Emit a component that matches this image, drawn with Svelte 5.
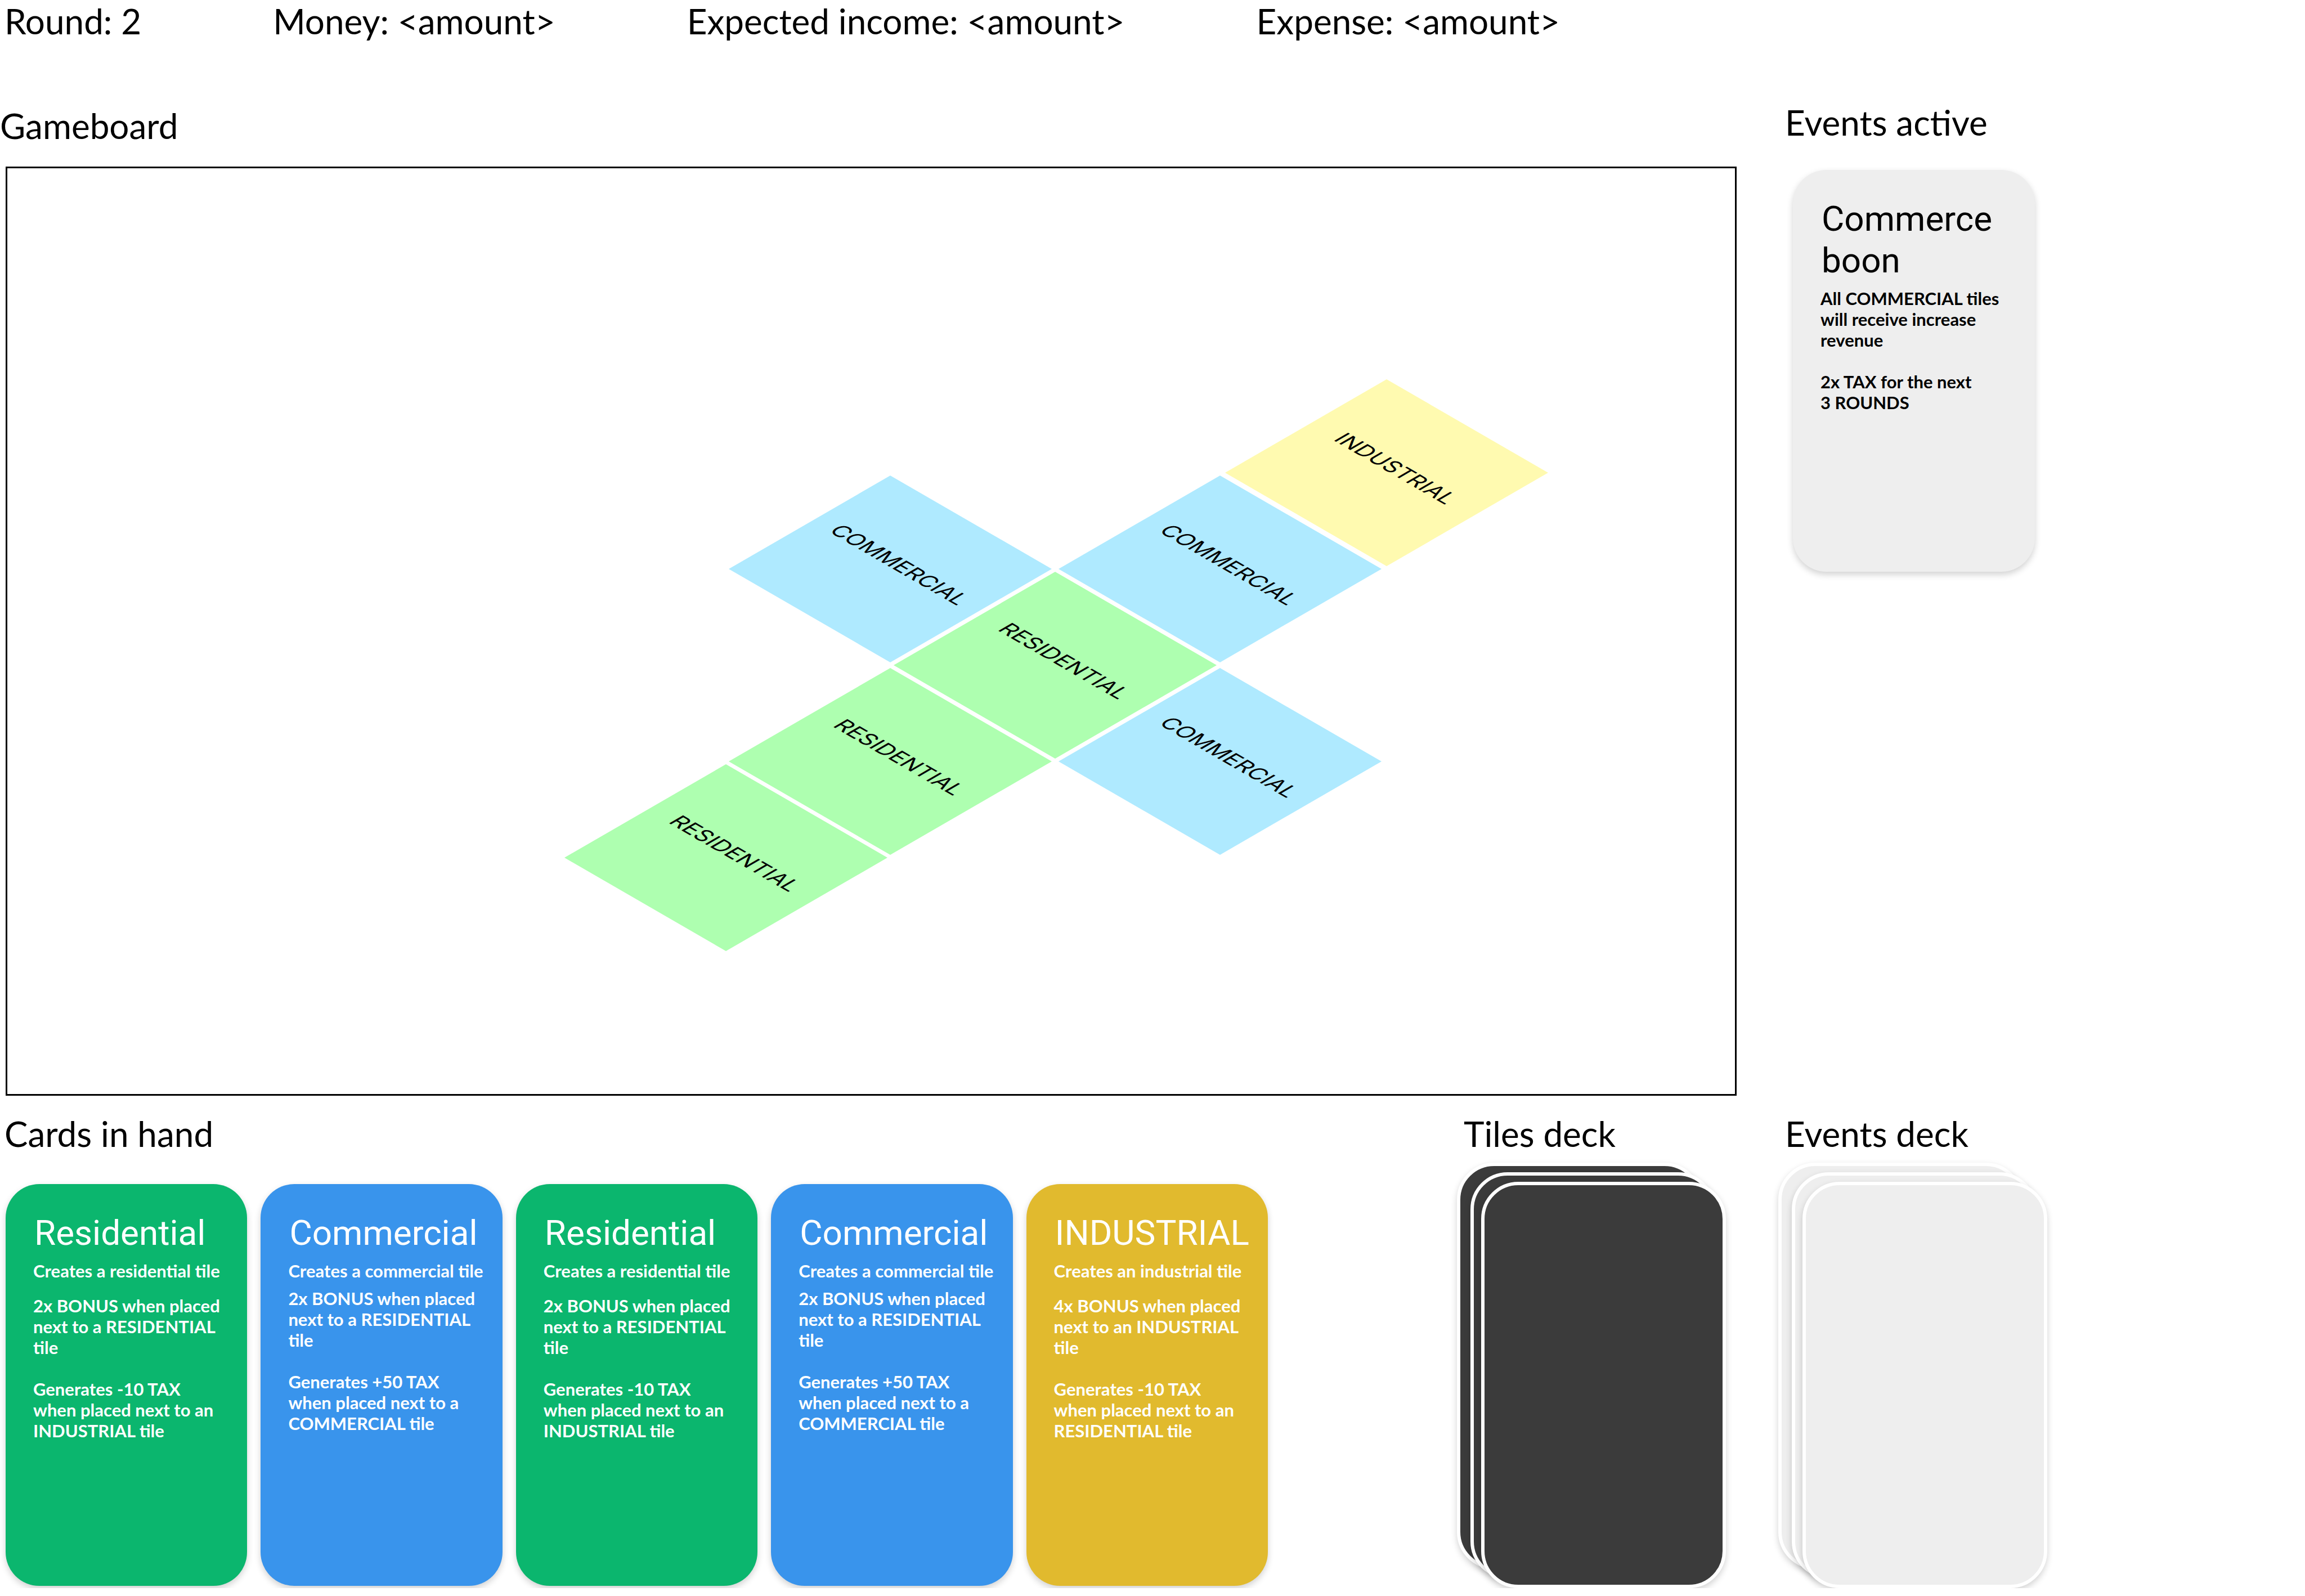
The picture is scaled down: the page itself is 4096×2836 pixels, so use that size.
<script>
  const stats = [
    { label: 'Round', value: '2' },
    { label: 'Money', value: '<amount>' },
    { label: 'Expected income', value: '<amount>' },
    { label: 'Expense', value: '<amount>' }
  ];

  // Tile centres on the board's own canvas.
  const tiles = [
    { kind: 'commercial', x: 1569, y: 712 },
    { kind: 'commercial', x: 2155, y: 712 },
    { kind: 'commercial', x: 2155, y: 1054 },
    { kind: 'industrial', x: 2451, y: 541 },
    { kind: 'residential', x: 1862, y: 883 },
    { kind: 'residential', x: 1569, y: 1054 },
    { kind: 'residential', x: 1277, y: 1225 }
  ];

  const residential = {
    kind: 'residential',
    title: 'Residential',
    summary: 'Creates a residential tile',
    bonus: '2x BONUS when placed next to a RESIDENTIAL tile',
    tax: 'Generates -10 TAX when placed next to an INDUSTRIAL tile'
  };
  const commercial = {
    kind: 'commercial',
    title: 'Commercial',
    summary: 'Creates a commercial tile',
    bonus: '2x BONUS when placed next to a RESIDENTIAL tile',
    tax: 'Generates +50 TAX when placed next to a COMMERCIAL tile'
  };
  const industrial = {
    kind: 'industrial',
    title: 'INDUSTRIAL',
    summary: 'Creates an industrial tile',
    bonus: '4x BONUS when placed next to an INDUSTRIAL tile',
    tax: 'Generates -10 TAX when placed next to an RESIDENTIAL tile'
  };
  const hand = [residential, commercial, residential, commercial, industrial];
</script>

<main class="game">
  <header class="stats">
    {#each stats as stat}
      <span>{stat.label}: {stat.value}</span>
    {/each}
  </header>

  <div class="layout">
    <section class="board-area">
      <h2>Gameboard</h2>
      <div class="board">
        <svg viewBox="0 0 3070 1645" role="img" aria-label="Gameboard tiles">
          {#each tiles as tile}
            <g transform="translate({tile.x} {tile.y})">
              <polygon class="tile {tile.kind}" points="-287,0 0,-166 287,0 0,166" />
              <text x="2" y="-3" transform="matrix(0.866 0.5 -0.866 0.5 0 0)">{tile.kind.toUpperCase()}</text>
            </g>
          {/each}
        </svg>
      </div>
    </section>

    <section class="events-area">
      <h2>Events active</h2>
      <article class="card event">
        <h3>Commerce boon</h3>
        <p>All COMMERCIAL tiles will receive increase revenue</p>
        <p>2x TAX for the next<br />3 ROUNDS</p>
      </article>
    </section>

    <div class="lower">
      <section class="hand-area">
        <h2>Cards in hand</h2>
        <div class="hand">
          {#each hand as card}
            <article class="card {card.kind}">
              <h3>{card.title}</h3>
              <p class="summary">{card.summary}</p>
              <p>{card.bonus}</p>
              <p>{card.tax}</p>
            </article>
          {/each}
        </div>
      </section>
      <section class="deck-area">
        <h2>Tiles deck</h2>
        <div class="deck dark">
          <span></span><span></span><span></span>
        </div>
      </section>
    </div>

    <section class="deck-area">
      <h2>Events deck</h2>
      <div class="deck light">
        <span></span><span></span><span></span>
      </div>
    </section>
  </div>
</main>

<style>
  :global(body) {
    background: #fff;
  }

  .game {
    color: #000;
    font-family: Lato, 'Liberation Sans', sans-serif;
  }

  .stats {
    display: flex;
    gap: 234px;
    padding-left: 8px;
    font-size: 62px;
    line-height: 74px;
  }

  h2,
  h3,
  p {
    margin: 0;
  }

  h2 {
    font-size: 62px;
    font-weight: 400;
    line-height: 74px;
  }

  .layout {
    display: grid;
    grid-template-columns: minmax(0, 1fr) 936px;
    row-gap: 30px;
    padding-top: 106px;
  }

  .board-area {
    padding: 6px 74px 0 0;
  }

  .board {
    margin: 36px 0 0 10px;
    border: 3px solid #000;
  }

  .board svg {
    display: block;
    width: 100%;
  }

  .board text {
    font-family: Inter, 'Liberation Sans', sans-serif;
    font-size: 39px;
    text-anchor: middle;
  }

  .tile.residential {
    fill: #aeffb0;
  }

  .tile.commercial {
    fill: #afeaff;
  }

  .tile.industrial {
    fill: #fffab0;
  }

  .events-area h2,
  .deck-area h2 {
    padding-left: 12px;
  }

  .hand-area h2 {
    margin-left: -2px;
  }

  .card {
    box-sizing: border-box;
    min-height: 714px;
    padding: 50px 30px 50px 49px;
    border-radius: 60px;
    box-shadow: 0 5px 12px rgba(0, 0, 0, 0.18);
    color: #fff;
    font-size: 31px;
    font-weight: 700;
    line-height: 37px;
  }

  .card h3 {
    margin-bottom: 12px;
    padding-left: 2px;
    font-family: Roboto, 'Liberation Sans', sans-serif;
    font-size: 62px;
    font-weight: 400;
    line-height: 74px;
  }

  .card p + p {
    margin-top: 37px;
    padding-right: 12px;
  }

  .card .summary + p {
    margin-top: 25px;
  }

  .card.commercial .summary + p {
    margin-top: 12px;
  }

  .card.residential {
    background: #0bb66e;
  }

  .card.commercial {
    background: #3994ec;
  }

  .card.industrial {
    background: #e1ba2e;
  }

  .card.event {
    width: 430px;
    margin: 48px 0 0 26px;
    background: #eee;
    color: #000;
  }

  .lower {
    display: grid;
    grid-template-columns: minmax(0, 1fr) 478px;
    column-gap: 336px;
    padding: 0 93px 0 10px;
  }

  .hand {
    display: grid;
    grid-template-columns: repeat(5, minmax(0, 1fr));
    gap: 24px;
    margin-top: 53px;
  }

  .deck {
    display: grid;
    width: 478px;
    height: 756px;
    margin-top: 15px;
  }

  .deck span {
    grid-area: 1 / 1;
    border: 6px solid #fff;
    border-radius: 66px;
    box-shadow: 0 5px 12px rgba(0, 0, 0, 0.18);
  }

  .deck span:nth-child(1) {
    margin: 0 43px 34px 0;
  }

  .deck span:nth-child(2) {
    margin: 17px 19px 17px 24px;
  }

  .deck span:nth-child(3) {
    margin: 34px 0 0 43px;
  }

  .deck.dark span {
    background: #3b3b3b;
  }

  .deck.light span {
    background: #eee;
  }
</style>
